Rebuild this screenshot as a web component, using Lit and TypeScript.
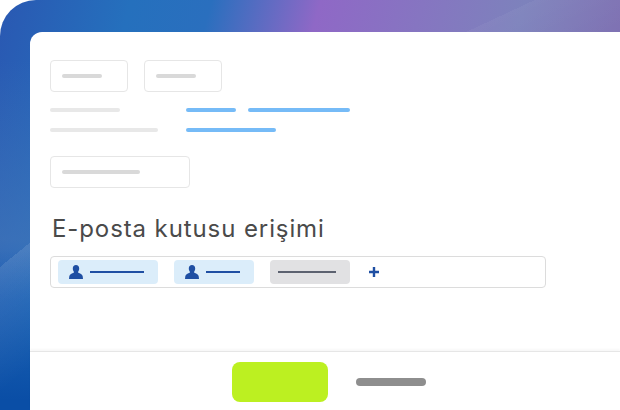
import { LitElement, html, css } from "lit";
import { customElement } from "lit/decorators.js";

@customElement("app-root")
export class AppRoot extends LitElement {
  static styles = css`
    :host { display: block; width: 620px; height: 410px; overflow: hidden; background: #fff; }
    .frame {
      box-sizing: border-box; width: 620px; height: 410px;
      padding: 32px 0 0 30px; border-top-left-radius: 36px; overflow: hidden;
      background:
        linear-gradient(155deg, transparent 226px, rgba(255,255,255,.04) 226px, rgba(255,255,255,0) 287px) 0 0 / 620px 32px no-repeat,
        linear-gradient(141deg, transparent 52px, rgba(255,255,255,.1) 52px, rgba(255,255,255,0) 150px) 0 200px / 30px 210px no-repeat,
        linear-gradient(180deg, rgba(10,78,166,0) 0, rgba(10,78,166,0) 250px, rgba(10,78,166,1) 400px),
        linear-gradient(180deg, rgba(72,120,184,0) 60px, rgba(72,120,184,.55) 240px, rgba(72,120,184,0) 300px) 0 0 / 30px 410px no-repeat,
        linear-gradient(105deg, #2a58b2 0, #2570bd 18%, #2a6fbe 29%, #8f68c6 44%, #7d82bc 72%, #7f72b3 86%);
    }
    .card {
      box-sizing: border-box; height: 378px; background: #fff; border-top-left-radius: 12px;
      display: flex; flex-direction: column;
    }
    .body { flex: 1; box-sizing: border-box; padding: 28px 0 0 20px; display: flex; flex-direction: column; }
    .chips { display: flex; gap: 16px; }
    .box {
      box-sizing: border-box; height: 32px; border: 1px solid #e6e6e6; border-radius: 4px;
      display: flex; align-items: center; padding-left: 11px; background: #fff;
    }
    .box.s { width: 78px; }
    .box.w { width: 140px; margin-top: 24px; }
    .bar { height: 4px; border-radius: 2px; }
    .dark { background: #d9d9d9; }
    .light { background: #e8e8e8; }
    .blue { background: #76bbf7; }
    .rows { display: grid; grid-template-columns: 136px auto; row-gap: 16px; margin-top: 16px; }
    .cells { display: flex; gap: 12px; }
    h1 {
      margin: 26px 0 0 2px; font: 400 24px/30px "Inter", "Liberation Sans", sans-serif; color: #4a4a4a;
      letter-spacing: .9px;
    }
    .input {
      box-sizing: border-box; width: 496px; height: 32px; margin-top: 12px;
      border: 1px solid #dcdcdc; border-radius: 4px;
      display: flex; align-items: center; padding-left: 7px; gap: 16px;
    }
    .tag {
      box-sizing: border-box; height: 24px; border-radius: 4px; background: #dbedfa;
      display: flex; align-items: center; padding-left: 11px; gap: 7px;
    }
    .tag.a { width: 100px; }
    .tag.b { width: 80px; }
    .tag.grey { width: 80px; background: #e1e1e3; padding-left: 8px; }
    .tag svg { width: 14px; height: 14px; display: block; flex: none; }
    .line { height: 2px; background: #1f4fa3; }
    .grey .line { background: #5c6270; }
    .plus { width: 10px; height: 10px; margin-left: 3px; display: block; }
    .foot {
      height: 59px; box-sizing: border-box; border-top: 1px solid #e6e6e6; padding-top: 2px;
      box-shadow: 0 -2px 2px rgba(0,0,0,.03);
      display: flex; align-items: center; padding-left: 202px; gap: 28px; flex: none;
    }
    .btn { width: 96px; height: 40px; border-radius: 8px; background: #bcf021; }
    .link { width: 70px; height: 8px; border-radius: 4px; background: #8e8e8e; }
  `;

  private person() {
    return html`<svg viewBox="0 0 14 14"><path fill="#1f4fa3" d="M7 0C5 0 3.8 1.4 3.8 3.4c0 1.3.5 2.4 1 3v1.3C3 8.3.6 9.2.3 11.2L0 14h14l-.3-2.8c-.3-2-2.7-2.9-4.5-3.5V6.4c.5-.6 1-1.7 1-3C10.200 1.400 9 0 7 0z"/></svg>`;
  }

  render() {
    return html`
      <div class="frame">
        <div class="card">
          <div class="body">
            <div class="chips">
              <div class="box s"><div class="bar dark" style="width:40px"></div></div>
              <div class="box s"><div class="bar dark" style="width:40px"></div></div>
            </div>
            <div class="rows">
              <div class="bar light" style="width:70px"></div>
              <div class="cells">
                <div class="bar blue" style="width:50px"></div>
                <div class="bar blue" style="width:102px"></div>
              </div>
              <div class="bar light" style="width:108px"></div>
              <div class="cells"><div class="bar blue" style="width:90px"></div></div>
            </div>
            <div class="box w"><div class="bar dark" style="width:78px"></div></div>
            <h1>E-posta kutusu erişimi</h1>
            <div class="input">
              <div class="tag a">${this.person()}<div class="line" style="width:54px"></div></div>
              <div class="tag b">${this.person()}<div class="line" style="width:34px"></div></div>
              <div class="tag grey"><div class="line" style="width:58px"></div></div>
              <svg class="plus" viewBox="0 0 10 10"><path fill="none" stroke="#1f4fa3" stroke-width="2.4" d="M5 0v10M0 5h10"/></svg>
            </div>
          </div>
          <div class="foot">
            <div class="btn"></div>
            <div class="link"></div>
          </div>
        </div>
      </div>
    `;
  }
}
